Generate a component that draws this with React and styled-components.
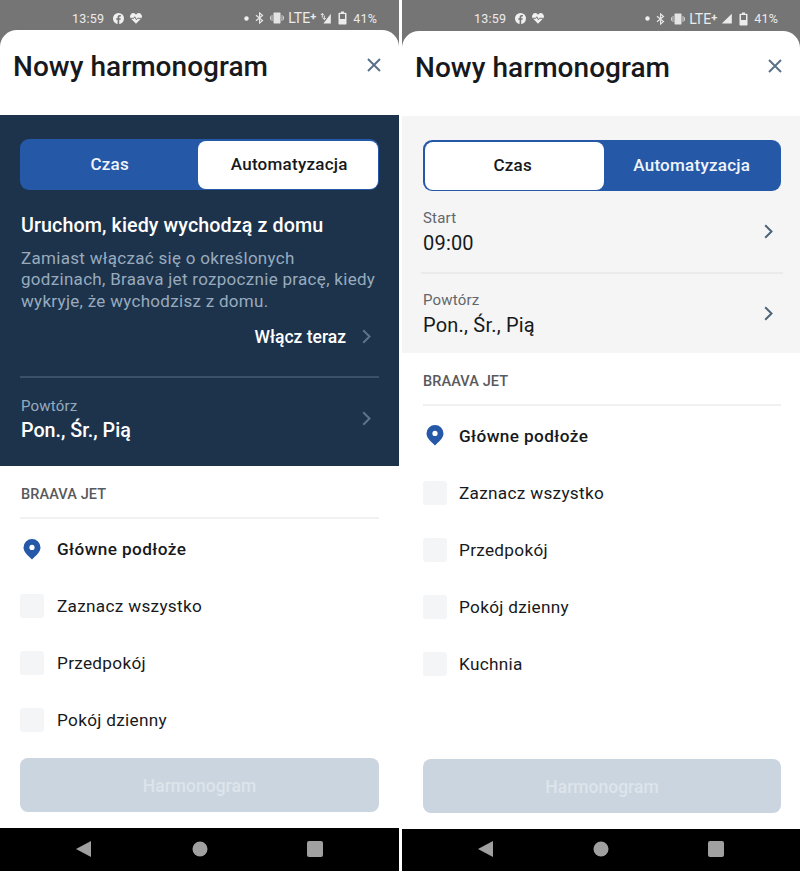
import React from "react";
import styled, { createGlobalStyle } from "styled-components";

const Global = createGlobalStyle`
  html, body { margin: 0; padding: 0; background: #fff; }
  body { font-family: Roboto, "Liberation Sans", sans-serif; }
  #root { width: 800px; height: 871px; overflow: hidden; }
`;

const Page = styled.div`
  display: flex;
  gap: 3px;
  width: 800px;
  height: 871px;
  background: #fff;
`;

const Phone = styled.div`
  --left: ${(p) => p.$left}px;
  --right: ${(p) => p.$right}px;
  --indent: ${(p) => p.$indent}px;
  --room-gap: ${(p) => p.$roomGap}px;
  --section-gap: ${(p) => p.$sectionGap}px;
  width: ${(p) => p.$width}px;
  height: 871px;
  display: flex;
  flex-direction: column;
  background: #757575;
`;

const StatusBar = styled.div`
  height: ${(p) => p.$height}px;
  flex: none;
  display: flex;
  align-items: center;
  padding: 6px 22px 0 72px;
  box-sizing: border-box;
  color: #ececec;
  font-size: 12.5px;
  letter-spacing: 0.2px;
`;

const StatusGroup = styled.div`
  display: flex;
  align-items: center;
  gap: ${(p) => p.$gap || 0}px;
  margin-left: ${(p) => (p.$push ? "auto" : "0")};
`;

const StatusItem = styled.span`
  display: flex;
  align-items: center;
  margin-left: ${(p) => p.$ml || 0}px;
`;

const Network = styled.span`
  font-size: 14px;
  letter-spacing: 0;
  display: flex;
  align-items: flex-start;
`;

const NetworkPlus = styled.span`
  font-size: 11px;
  font-weight: 700;
  line-height: 11px;
  margin-top: 1px;
`;

const Sheet = styled.div`
  flex: 1;
  min-height: 0;
  display: flex;
  flex-direction: column;
  background: #fff;
  border-radius: 17px 17px 0 0;
  overflow: hidden;
`;

const Header = styled.div`
  height: 85px;
  flex: none;
  box-sizing: border-box;
  display: flex;
  align-items: flex-start;
  justify-content: space-between;
  padding: 19px 18px 0 13px;
`;

const Title = styled.h1`
  margin: 0;
  font-size: 28px;
  line-height: 36px;
  font-weight: 500;
  letter-spacing: 0.05px;
  color: #17191c;
`;

const CloseButton = styled.span`
  display: flex;
  margin-top: 9px;
  color: #5b7089;
`;

const Panel = styled.div`
  flex: none;
  padding: 24px var(--right) 0 var(--left);
  background: ${(p) => (p.$dark ? "#1d334b" : "#f5f5f5")};
`;

const Toggle = styled.div`
  display: flex;
  height: 51px;
  box-sizing: border-box;
  padding: 1.5px;
  border-radius: 9px;
  background: #2559a8;
`;

const Segment = styled.div`
  flex: ${(p) => (p.$active ? "none" : "1")};
  width: ${(p) => (p.$active ? "179.5px" : "auto")};
  box-sizing: border-box;
  padding: 0 ${(p) => p.$padRight || 0}px 2px ${(p) => p.$padLeft || 0}px;
  display: flex;
  align-items: center;
  justify-content: center;
  border-radius: 8px;
  font-size: 17px;
  font-weight: 500;
  letter-spacing: 0.25px;
  background: ${(p) => (p.$active ? "#fff" : "transparent")};
  color: ${(p) => (p.$active ? "#17191c" : "#f0f4fa")};
`;

const Intro = styled.div`
  padding: 23px 0 0 var(--indent);
`;

const IntroTitle = styled.h2`
  margin: 0;
  font-size: 19.7px;
  line-height: 26px;
  font-weight: 500;
  letter-spacing: 0.1px;
  color: #fff;
`;

const IntroText = styled.p`
  margin: 8.5px 0 0;
  font-size: 17px;
  line-height: 21.6px;
  letter-spacing: 0.3px;
  color: #98abbe;
`;

const EnableRow = styled.div`
  display: flex;
  align-items: center;
  justify-content: flex-end;
  gap: 16px;
  padding: 14.5px 8px 0 0;
  font-size: 17.5px;
  font-weight: 500;
  color: #fff;
`;

const Divider = styled.div`
  height: 2px;
  margin: ${(p) => p.$top || 0}px ${(p) => p.$bleed || 0}px 0 ${(p) => p.$bleed || 0}px;
  background: ${(p) => p.$color};
`;

const SettingRow = styled.div`
  display: flex;
  align-items: center;
  justify-content: space-between;
  height: ${(p) => p.$height}px;
  box-sizing: border-box;
  padding: 0 8px ${(p) => p.$lift || 0}px var(--indent);
`;

const SettingText = styled.div`
  padding-top: ${(p) => (p.$dark ? 1 : 2)}px;
`;

const SettingLabel = styled.div`
  font-size: 15px;
  line-height: 19px;
  letter-spacing: 0.2px;
  color: ${(p) => (p.$dark ? "#98abbe" : "#62666b")};
`;

const SettingValue = styled.div`
  margin-top: ${(p) => (p.$dark ? 1 : 2)}px;
  font-size: ${(p) => (p.$dark ? 19.7 : 20)}px;
  line-height: 27px;
  font-weight: ${(p) => (p.$dark ? 500 : 400)};
  letter-spacing: ${(p) => (p.$dark ? 0 : 0.2)}px;
  color: ${(p) => (p.$dark ? "#fff" : "#17191c")};
`;

const Chevron = styled.span`
  display: flex;
  margin-bottom: ${(p) => p.$up || 0}px;
  color: ${(p) => p.$color};
`;

const Rooms = styled.div`
  flex: 1;
  min-height: 0;
  overflow: hidden;
  padding: 0 var(--right) 0 var(--left);
`;

const SectionLabel = styled.div`
  height: 53px;
  margin-bottom: var(--section-gap);
  box-sizing: border-box;
  padding: 20px 0 0 var(--indent);
  font-size: 14.5px;
  line-height: 18px;
  font-weight: 500;
  letter-spacing: 0.1px;
  color: #58595c;
  border-bottom: 2px solid #f0f1f2;
`;

const Room = styled.div`
  display: flex;
  align-items: center;
  gap: var(--room-gap);
  height: 57px;
  font-size: 17.2px;
  font-weight: ${(p) => (p.$strong ? 500 : 400)};
  letter-spacing: ${(p) => (p.$strong ? 0.4 : 0.3)}px;
  color: #17191c;
`;

const Check = styled.span`
  width: 24px;
  height: 24px;
  flex: none;
  border-radius: 3px;
  background: #f3f5f7;
`;

const PinSlot = styled.span`
  width: 24px;
  flex: none;
  display: flex;
  justify-content: center;
  color: #2559a8;
`;

const Footer = styled.div`
  flex: none;
  padding: 0 var(--right) 16px var(--left);
`;

const ScheduleButton = styled.div`
  height: 54px;
  box-sizing: border-box;
  padding-top: 2px;
  border-radius: 8px;
  display: flex;
  align-items: center;
  justify-content: center;
  background: #cbd5df;
  color: #dde4eb;
  font-size: 17.5px;
  font-weight: 500;
`;

const NavBar = styled.div`
  height: ${(p) => p.$height}px;
  flex: none;
  display: flex;
  align-items: center;
  justify-content: space-between;
  padding: 0 76px 2px 76px;
  box-sizing: border-box;
  background: #000;
  color: #a0a0a0;
`;

const Svg = ({ w, h, children }) => (
  <svg width={w} height={h} viewBox={`0 0 ${w} ${h}`} fill="none" aria-hidden="true">
    {children}
  </svg>
);

const FacebookIcon = () => (
  <Svg w={11} h={11}>
    <circle cx="5.5" cy="5.5" r="5.5" fill="#f0f0f0" />
    <path d="M6.2 11V6.8h1.3l.3-1.6H6.2v-1c0-.5.2-.8.8-.8h.9V2a7 7 0 0 0-1.2-.1c-1.300 0-2.100.8-2.100 2.100v1.200H3.200v1.600h1.400V11z" fill="#757575" />
  </Svg>
);

const HeartIcon = () => (
  <Svg w={12} h={11}>
    <path d="M6 10.800.9 5.600A3 3 0 0 1 .5 2 3 3 0 0 1 6 1.700 3 3 0 0 1 11.500 2a3 3 0 0 1-.4 3.600z" fill="#f0f0f0" />
    <path d="M.8 5.300h3l1-1.500 1.600 3 1-1.500h3.800" stroke="#757575" strokeWidth="1" />
  </Svg>
);

const DotIcon = () => (
  <Svg w={5} h={5}>
    <circle cx="2.500" cy="2.500" r="2.200" fill="#f0f0f0" />
  </Svg>
);

const BluetoothIcon = () => (
  <Svg w={9} h={12}>
    <path d="M1 3.200 7.500 8.600 4.600 11V1l2.900 2.400L1 8.800" stroke="#e8e8e8" strokeWidth="1.200" />
  </Svg>
);

const VibrateIcon = () => (
  <Svg w={14} h={12}>
    <rect x="3.500" y="0.500" width="7" height="11" rx="0.800" fill="#e4e4e4" />
    <path d="M2 3v6M0.500 4.300v3.400M12 3v6M13.500 4.300v3.400" stroke="#d0d0d0" strokeWidth="1" />
  </Svg>
);

const SignalIcon = ({ data }) => (
  <Svg w={11} h={11}>
    <path d={data ? "M10.800.8V10.500H3.400z" : "M10.800.8V10.500H.8z"} fill="#ececec" />
    {data && <path d="M2.300.5v4M.8 2l1.500-1.500L3.800 2M4.300 2.500V6.500M2.800 5l1.500 1.500L5.800 5" stroke="#ececec" strokeWidth="1" />}
  </Svg>
);

const BatteryIcon = () => (
  <Svg w={9} h={14}>
    <path d="M3 .5h3v1.200h1.600c.4 0 .9.3.9.8v10.200c0 .4-.5.800-.9.800H1.400c-.4 0-.9-.4-.9-.8V2.500c0-.5.5-.8.9-.8H3z" fill="#ececec" />
    <rect x="2" y="3" width="5" height="5" fill="#757575" />
  </Svg>
);

const CloseIcon = () => (
  <Svg w={14} h={14}>
    <path d="M1 1 13 13M13 1 1 13" stroke="currentColor" strokeWidth="2" />
  </Svg>
);

const ChevronIcon = () => (
  <Svg w={9} h={15}>
    <path d="M1.200 1.300 7.500 7.500 1.200 13.700" stroke="currentColor" strokeWidth="2" />
  </Svg>
);

const PinIcon = () => (
  <Svg w={18} h={21}>
    <path fillRule="evenodd" clipRule="evenodd" d="M9 20.500C5 16.800.5 13 .5 8.600a8.500 8.500 0 0 1 17 0C17.500 13 13 16.800 9 20.500zM9 11a2.600 2.600 0 1 0 0-5.200A2.600 2.600 0 0 0 9 11z" fill="currentColor" />
  </Svg>
);

const BackIcon = () => (
  <Svg w={16} h={16}>
    <path d="M15 0v16L0 8z" fill="currentColor" />
  </Svg>
);

const HomeIcon = () => (
  <Svg w={16} h={16}>
    <circle cx="8" cy="8" r="7.500" fill="currentColor" />
  </Svg>
);

const RecentIcon = () => (
  <Svg w={16} h={16}>
    <rect width="16" height="16" rx="2" fill="currentColor" />
  </Svg>
);

const Status = ({ height, data }) => (
  <StatusBar $height={height}>
    <StatusGroup $gap={9}>
      <span>13:59</span>
      <StatusGroup $gap={6}>
        <FacebookIcon />
        <HeartIcon />
      </StatusGroup>
    </StatusGroup>
    <StatusGroup $push>
      <StatusItem><DotIcon /></StatusItem>
      <StatusItem $ml={6}><BluetoothIcon /></StatusItem>
      <StatusItem $ml={6}><VibrateIcon /></StatusItem>
      <StatusItem $ml={4}>
        <Network>LTE<NetworkPlus>+</NetworkPlus></Network>
      </StatusItem>
      <StatusItem $ml={4}><SignalIcon data={data} /></StatusItem>
      <StatusItem $ml={7}><BatteryIcon /></StatusItem>
      <StatusItem $ml={6}>41%</StatusItem>
    </StatusGroup>
  </StatusBar>
);

const Setting = ({ label, value, dark, height, lift }) => (
  <SettingRow $height={height} $lift={lift}>
    <SettingText $dark={dark}>
      <SettingLabel $dark={dark}>{label}</SettingLabel>
      <SettingValue $dark={dark}>{value}</SettingValue>
    </SettingText>
    <Chevron $color={dark ? "#5f7489" : "#4d6478"} $up={dark ? 4 : 0}>
      <ChevronIcon />
    </Chevron>
  </SettingRow>
);

const Nav = ({ height }) => (
  <NavBar $height={height}>
    <BackIcon />
    <HomeIcon />
    <RecentIcon />
  </NavBar>
);

const RoomList = ({ rooms }) => (
  <Rooms>
    <SectionLabel>BRAAVA JET</SectionLabel>
    <Room $strong>
      <PinSlot>
        <PinIcon />
      </PinSlot>
      Główne podłoże
    </Room>
    {rooms.map((room) => (
      <Room key={room}>
        <Check />
        {room}
      </Room>
    ))}
  </Rooms>
);

const ModeToggle = ({ active }) => (
  <Toggle>
    <Segment $active={active === "czas"} $padRight={active === "czas" ? 3 : 0}>Czas</Segment>
    <Segment $active={active === "auto"} $padLeft={active === "auto" ? 3 : 0}>Automatyzacja</Segment>
  </Toggle>
);

const TopBar = () => (
  <Header>
    <Title>Nowy harmonogram</Title>
    <CloseButton><CloseIcon /></CloseButton>
  </Header>
);

const Schedule = () => (
  <Footer>
    <ScheduleButton>Harmonogram</ScheduleButton>
  </Footer>
);

export default function App() {
  return (
    <>
      <Global />
      <Page>
        <Phone $width={399} $left={20} $right={20} $indent={1} $roomGap={13} $sectionGap={2}>
          <Status height={30} data />
          <Sheet>
            <TopBar />
            <Panel $dark>
              <ModeToggle active="auto" />
              <Intro>
                <IntroTitle>Uruchom, kiedy wychodzą z domu</IntroTitle>
                <IntroText>
                  Zamiast włączać się o określonych godzinach, Braava jet rozpocznie pracę, kiedy wykryje, że wychodzisz z domu.
                </IntroText>
                <EnableRow>
                  Włącz teraz
                  <Chevron $color="#5f7489"><ChevronIcon /></Chevron>
                </EnableRow>
              </Intro>
              <Divider $color="#3a5169" $top={29} />
              <Setting dark label="Powtórz" value="Pon., Śr., Pią" height={88} lift={3} />
            </Panel>
            <RoomList rooms={["Zaznacz wszystko", "Przedpokój", "Pokój dzienny"]} />
            <Schedule />
          </Sheet>
          <Nav height={43} />
        </Phone>
        <Phone $width={398} $left={21} $right={19} $indent={0} $roomGap={12} $sectionGap={1}>
          <Status height={31} />
          <Sheet>
            <TopBar />
            <Panel>
              <ModeToggle active="czas" />
              <Setting label="Start" value="09:00" height={81} />
              <Divider $color="#eaeaea" $bleed={-2} />
              <Setting label="Powtórz" value="Pon., Śr., Pią" height={79} />
            </Panel>
            <RoomList rooms={["Zaznacz wszystko", "Przedpokój", "Pokój dzienny", "Kuchnia"]} />
            <Schedule />
          </Sheet>
          <Nav height={42} />
        </Phone>
      </Page>
    </>
  );
}
